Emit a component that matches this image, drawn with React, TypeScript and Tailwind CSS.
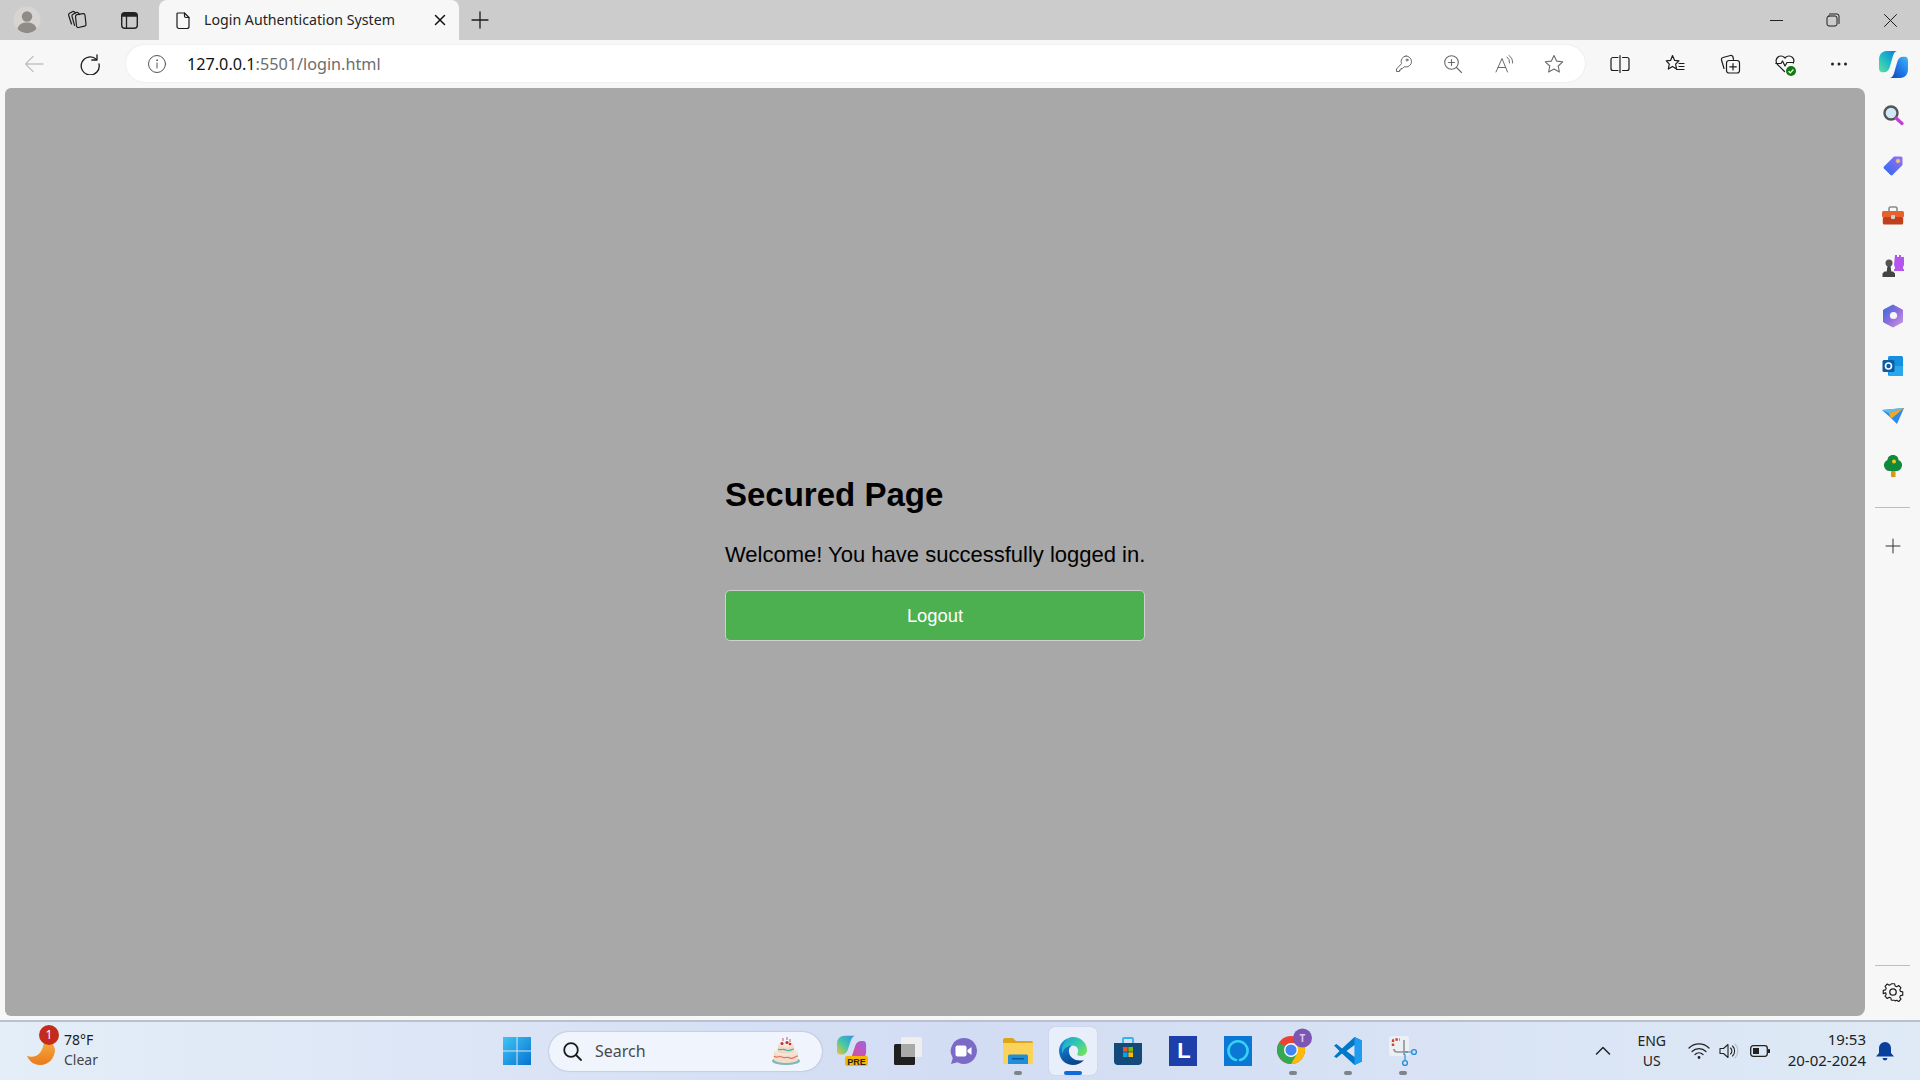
import React from "react";

const ui = "font-['Noto_Sans','Open_Sans',sans-serif]";

function S({ size = 20, children, className = "", vb = "0 0 20 20", sw = 1.2 }: { size?: number; children: React.ReactNode; className?: string; vb?: string; sw?: number }) {
  return (
    <svg width={size} height={size} viewBox={vb} fill="none" stroke="currentColor" strokeWidth={sw} strokeLinecap="round" strokeLinejoin="round" className={className}>
      {children}
    </svg>
  );
}

function Cell({ w, children, className = "" }: { w: string; children?: React.ReactNode; className?: string }) {
  return <div className={`flex h-full shrink-0 items-center justify-center ${w} ${className}`}>{children}</div>;
}

const LEFT_BLOB = "M8 1H19C17 1 15.500 3 14.500 6L11 18C10 21 8 23 5 23H3C1 23 0 21 0 19V10C0 5 3 1 8 1z";
const RIGHT_BLOB = "M22 29H11C13 29 14.500 27 15.500 24L19 12C20 9 22 7 25 7H27C29 7 30 9 30 11V20C30 25 27 29 22 29z";

function TabStrip() {
  return (
    <div className="flex h-10 shrink-0 bg-[#cccccc] text-[#1c1c1c]">
      <Cell w="w-[54px]">
        <svg width="28" height="28" viewBox="0 0 28 28">
          <circle cx="14" cy="14" r="13.500" fill="#d6d5d2" />
          <circle cx="14" cy="10.500" r="5.200" fill="#8f8c87" />
          <path d="M4.500 23c1-5 5-6.500 9.500-6.500s8.500 1.500 9.500 6.500a13 13 0 0 1-19 0z" fill="#8f8c87" />
        </svg>
      </Cell>
      <Cell w="w-[46px]">
        <S size={22} vb="0 0 22 22" sw={1.200}>
          <path d="M9.500 7.500a1.800 1.800 0 0 1 1.500-1.800l6-1a1.800 1.800 0 0 1 2 1.500l1 9a1.800 1.800 0 0 1-1.500 2l-6 1.300a1.800 1.800 0 0 1-2-1.500z" />
          <path d="M13.500 5.500 12.500 4a1.800 1.800 0 0 0-2.200-.5L7 5.200A1.800 1.800 0 0 0 6 7.300l2.500 9" />
          <path d="M9.500 3.800 8.500 3a1.800 1.800 0 0 0-2.200-.3L3.500 4.300A1.800 1.800 0 0 0 2.700 6.500l2.800 8.500" />
        </S>
      </Cell>
      <Cell w="w-[59px]">
        <svg width="19" height="19" viewBox="0 0 19 19" fill="none">
          <rect x="1.700" y="1.700" width="15.600" height="15.600" rx="3" stroke="#222" strokeWidth="1.400" />
          <path d="M2 5.700V4a2 2 0 0 1 2-2h11a2 2 0 0 1 2 2v1.700z" fill="#222" />
          <path d="M6.500 5v12" stroke="#222" strokeWidth="1.300" />
        </svg>
      </Cell>
      <div className={`flex w-[300px] shrink-0 items-center self-stretch rounded-t-lg bg-[#f7f7f7] pl-[15px] ${ui}`}>
        <S size={19} vb="0 0 19 19" sw={1.200}>
          <path d="M4 2h6.500L15 6.500V15.500a2 2 0 0 1-2 2H5a2 2 0 0 1-2-2V3a1 1 0 0 1 1-1z" />
          <path d="M10.500 2v3a1.500 1.500 0 0 0 1.500 1.500h3" />
        </S>
        <span className="ml-[11px] w-[229px] whitespace-nowrap text-[14.200px] leading-none text-[#242424]">Login Authentication System</span>
        <S size={14} vb="0 0 14 14" sw={1.500} className="text-[#111]">
          <path d="M2.500 2.500l9 9M11.500 2.500l-9 9" />
        </S>
      </div>
      <Cell w="w-[42px]">
        <S size={20} vb="0 0 20 20" sw={1.300}>
          <path d="M10 2v16M2 10h16" />
        </S>
      </Cell>
      <div className="flex-1" />
      <Cell w="w-[56px]" className="pr-[2px]">
        <div className="h-px w-[13px] bg-[#222]" />
      </Cell>
      <Cell w="w-[56px]">
        <S size={14} vb="0 0 14 14" sw={1}>
          <rect x="1" y="3" width="10" height="10" rx="2" />
          <path d="M3.500 1h7.500a2 2 0 0 1 2 2v7.500" />
        </S>
      </Cell>
      <Cell w="w-[59px]">
        <S size={15} vb="0 0 15 15" sw={1}>
          <path d="M1.500 1.500l12 12M13.500 1.500l-12 12" />
        </S>
      </Cell>
    </div>
  );
}

function Toolbar() {
  return (
    <div className="flex h-12 shrink-0 items-start bg-[#f7f7f7] text-[#1c1c1c]">
      <Cell w="w-[68px]" className="text-[#c2c2c2]">
        <S size={22} vb="0 0 22 22" sw={1.300}>
          <path d="M20 11H2.500M10 3.500 2.500 11l7.500 7.500" />
        </S>
      </Cell>
      <Cell w="w-[44px]">
        <S size={22} vb="0 0 22 22" sw={1.300}>
          <path d="M17.500 6.500A9 9 0 1 0 20 11" />
          <path d="M18 1.800v5.200h-5.200" />
        </S>
      </Cell>
      <div className={`ml-[14px] mt-[5px] flex h-[37px] w-[1459px] shrink-0 items-center rounded-full bg-white shadow-[0_0_2px_rgba(0,0,0,0.1)] ${ui}`}>
        <div className="flex w-[61px] shrink-0 items-center justify-center text-[#555]">
          <S size={20} vb="0 0 20 20" sw={1}>
            <circle cx="10" cy="10" r="8.500" />
            <path d="M10 9v5" />
            <circle cx="10" cy="6.200" r="0.400" />
          </S>
        </div>
        <span className="whitespace-nowrap pt-[1px] text-[16.200px] leading-none text-[#6d6d6d]">
          <span className="text-[#111]">127.0.0.1</span>:5501/login.html
        </span>
        <div className="flex-1" />
        <div className="flex items-center text-[#6a6a6a]">
          <Cell w="w-[50px]" className="!h-auto">
            <S size={20} vb="0 0 20 20" sw={1}>
              <path d="M12.500 2a5.500 5.500 0 0 1 0 11c-.7 0-1.300-.1-1.900-.3L9 14.500H7.500V16H6v1.500H3v-2.500l5-5.300a5.500 5.500 0 0 1 4.500-7.700z" transform="translate(0.500 0)" />
              <circle cx="14" cy="6" r="1" />
            </S>
          </Cell>
          <Cell w="w-[50px]" className="!h-auto">
            <S size={20} vb="0 0 20 20" sw={1.100}>
              <circle cx="8.500" cy="8.500" r="6.800" />
              <path d="M13.500 13.500 18.500 18.500M8.500 5.500v6M5.500 8.500h6" />
            </S>
          </Cell>
          <Cell w="w-[51px]" className="!h-auto">
            <S size={20} vb="0 0 20 20" sw={1}>
              <path d="M2 18 8 4.500 13.500 18M4 13.500h7.500" />
              <path d="M13 3a6 6 0 0 1 2.500 6M15 1.500a8 8 0 0 1 3.500 7.500" />
            </S>
          </Cell>
          <Cell w="w-[50px]" className="!h-auto">
            <S size={22} vb="0 0 22 22" sw={1.100}>
              <path d="M11 2.500l2.600 5.600 6.100.7-4.500 4.200 1.200 6-5.400-3-5.400 3 1.200-6-4.500-4.200 6.100-.7z" />
            </S>
          </Cell>
          <div className="w-[6px]" />
        </div>
      </div>
      <div className="ml-[7px] flex h-[48px] items-center">
        <Cell w="w-[55px]">
          <S size={22} vb="0 0 22 22" sw={1.200}>
            <path d="M9 4.500H4a2 2 0 0 0-2 2v9a2 2 0 0 0 2 2h5M13.500 4.500h4.500a2 2 0 0 1 2 2v9a2 2 0 0 1-2 2h-4.500M11 2.500v17" />
          </S>
        </Cell>
        <Cell w="w-[55px]">
          <S size={22} vb="0 0 22 22" sw={1.200}>
            <path d="M8.500 2.500l2 4.800 4.500.5-3.400 3.300 1 4.900-4.100-2.600-4.200 2.600 1-4.900L2.300 7.800l4.400-.5z" />
            <path d="M15 10.500h5M15 13.500h5M12.500 16.500h7.500" />
          </S>
        </Cell>
        <Cell w="w-[55px]">
          <S size={22} vb="0 0 22 22" sw={1.200}>
            <rect x="7.500" y="7.500" width="13" height="12.500" rx="2.500" />
            <path d="M14 10.500v6.500M10.800 13.800h6.500M5 15.500 2.500 7a2 2 0 0 1 1.500-2.500L11.500 2.500a2 2 0 0 1 2.500 1.500l.5 2.500" />
          </S>
        </Cell>
        <Cell w="w-[55px]" className="relative">
          <S size={22} vb="0 0 22 22" sw={1.200}>
            <path d="M10.500 18.500 3.500 11.500a5 5 0 0 1 0-7 4.800 4.800 0 0 1 7 0l.5.500.5-.5a4.800 4.800 0 0 1 7 0c1.500 1.500 1.700 3.700.8 5.500" />
            <path d="M1.800 10.500H7l1.500-2.500L11 13l2-3.500h6" />
          </S>
          <svg width="10" height="10" viewBox="0 0 10 10" className="absolute left-[29px] top-[26px]">
            <circle cx="5" cy="5" r="5" fill="#107c10" />
            <path d="M2.600 5.200 4.300 6.800 7.400 3.500" fill="none" stroke="#fff" strokeWidth="1.200" />
          </svg>
        </Cell>
        <Cell w="w-[54px]">
          <svg width="18" height="4" viewBox="0 0 18 4" fill="#222">
            <circle cx="2.500" cy="2" r="1.500" />
            <circle cx="9" cy="2" r="1.500" />
            <circle cx="15.500" cy="2" r="1.500" />
          </svg>
        </Cell>
        <Cell w="w-[54px]">
          <svg width="31" height="29" viewBox="0 0 30 30">
            <defs>
              <linearGradient id="cop1" x1="0" y1="1" x2="1" y2="0">
                <stop offset="0" stopColor="#5fe0a0" />
                <stop offset="0.5" stopColor="#1cb8c8" />
                <stop offset="1" stopColor="#0a78d8" />
              </linearGradient>
              <linearGradient id="cop2" x1="0" y1="1" x2="1" y2="0">
                <stop offset="0" stopColor="#0d44b8" />
                <stop offset="0.5" stopColor="#1f78e8" />
                <stop offset="1" stopColor="#40b8f5" />
              </linearGradient>
            </defs>
            <path d={LEFT_BLOB} fill="url(#cop1)" />
            <path d={RIGHT_BLOB} fill="url(#cop2)" />
          </svg>
        </Cell>
      </div>
    </div>
  );
}

function SideIcon({ children, className = "mt-[26px]" }: { children: React.ReactNode; className?: string }) {
  return <div className={`flex h-[24px] w-full shrink-0 items-center justify-center ${className}`}>{children}</div>;
}

function Sidebar() {
  return (
    <div className="flex h-full w-[55px] shrink-0 flex-col items-center bg-[#f7f7f7]">
      <SideIcon className="mt-[15px]">
        <svg width="22" height="22" viewBox="0 0 22 22">
          <circle cx="9" cy="9" r="6.500" fill="#cfe9f8" stroke="#555" strokeWidth="2.400" />
          <path d="M14 14l6 5.500" stroke="#c03fd0" strokeWidth="3.200" strokeLinecap="round" />
        </svg>
      </SideIcon>
      <SideIcon className="mt-[27px]">
        <svg width="22" height="22" viewBox="0 0 22 22">
          <defs>
            <linearGradient id="tag" x1="0" y1="1" x2="1" y2="0">
              <stop offset="0" stopColor="#2a6af0" />
              <stop offset="1" stopColor="#9a70f0" />
            </linearGradient>
          </defs>
          <path d="M12 1.500h7a1.500 1.500 0 0 1 1.500 1.500v7L10.500 20a1.500 1.500 0 0 1-2 0L2 13.500a1.500 1.500 0 0 1 0-2z" fill="url(#tag)" />
          <circle cx="16" cy="6" r="2" fill="#f8d040" stroke="#b9a0f0" strokeWidth="0.600" />
        </svg>
      </SideIcon>
      <SideIcon>
        <svg width="24" height="20" viewBox="0 0 24 20">
          <path d="M8 5V2.500A1.500 1.500 0 0 1 9.500 1h5A1.500 1.500 0 0 1 16 2.500V5" fill="none" stroke="#8a8a8a" strokeWidth="1.600" />
          <rect x="1" y="5" width="22" height="6.500" rx="1.500" fill="#e8602c" />
          <rect x="1.800" y="11" width="20.400" height="7.500" rx="1.500" fill="#c0401c" />
          <rect x="10" y="9" width="4" height="4" rx="1" fill="#d0d0d0" />
        </svg>
      </SideIcon>
      <SideIcon>
        <svg width="24" height="24" viewBox="0 0 24 24">
          <path d="M14 1h2v2h2V1h2v2h3V1v10l-1 2v2h1v2H13v-2h1v-2l-1-2z" fill="#b455ee" />
          <circle cx="8" cy="9" r="3.500" fill="#555" />
          <path d="M6.500 12h3l.8 5.500H12l2 2V23H1.500v-3.500l2-2h2.200z" fill="#444" />
        </svg>
      </SideIcon>
      <SideIcon>
        <svg width="22" height="24" viewBox="0 0 22 24">
          <defs>
            <linearGradient id="m365" x1="0" y1="0" x2="1" y2="1">
              <stop offset="0" stopColor="#2f6fe0" />
              <stop offset="0.5" stopColor="#8e6cdc" />
              <stop offset="1" stopColor="#c89ae5" />
            </linearGradient>
          </defs>
          <path d="M11 1 20.500 6v12L11 23 1.500 18V6z" fill="url(#m365)" stroke="url(#m365)" strokeWidth="1" strokeLinejoin="round" />
          <circle cx="11.500" cy="11.500" r="3.600" fill="#f7f7f7" />
        </svg>
      </SideIcon>
      <SideIcon>
        <svg width="22" height="22" viewBox="0 0 22 22">
          <rect x="6" y="1" width="15" height="20" rx="1.500" fill="#1490df" />
          <path d="M7 11h14v8.500a1.500 1.500 0 0 1-1.500 1.500H7z" fill="#28a8ea" />
          <rect x="0.500" y="5" width="12" height="12" rx="1.500" fill="#0a5ca8" />
          <circle cx="6.500" cy="11" r="3" fill="none" stroke="#fff" strokeWidth="1.600" />
        </svg>
      </SideIcon>
      <SideIcon>
        <svg width="24" height="18" viewBox="0 0 24 18">
          <path d="M1 3 23 1 16 17 10 11z" fill="#2a8ce8" />
          <path d="M1 3 23 1 8 6z" fill="#58c0f5" />
          <path d="M23 1 8 6l2 6z" fill="#f5a623" />
        </svg>
      </SideIcon>
      <SideIcon>
        <svg width="20" height="24" viewBox="0 0 20 24">
          <rect x="8" y="16" width="4.500" height="7" fill="#d89a10" />
          <path d="M10 1c3.500 0 5.500 2.500 5.500 5 2.500 1 4 3.500 3.500 6-.5 3-3 5-5.500 5h-7C4 17 1.500 15 1 12c-.5-2.500 1-5 3.500-6C4.500 3.500 6.500 1 10 1z" fill="#0f8a3c" />
          <circle cx="11" cy="7.500" r="2" fill="#f5c518" />
        </svg>
      </SideIcon>
      <div className="mt-[29px] h-px w-[35px] shrink-0 bg-[#bdbdbd]" />
      <div className="mt-[28px] flex h-[20px] items-center justify-center text-[#333]">
        <S size={16} vb="0 0 16 16" sw={1}>
          <path d="M8 1v14M1 8h14" />
        </S>
      </div>
      <div className="flex-1" />
      <div className="h-px w-[35px] shrink-0 bg-[#bdbdbd]" />
      <div className="mb-[16px] mt-[14px] flex h-[24px] items-center justify-center text-[#1c1c1c]">
        <svg width="22" height="22" viewBox="0 0 24 24" fill="none" stroke="currentColor" strokeWidth="1.400" strokeLinejoin="round">
          <path d="M10 2h4l.6 2.800 1.900.8 2.400-1.500 2.800 2.800-1.500 2.400.8 1.900 2.800.6v4l-2.800.6-.8 1.900 1.500 2.400-2.800 2.800-2.400-1.500-1.900.8L14 22h-4l-.6-2.800-1.900-.8-2.400 1.500-2.800-2.800 1.500-2.400-.8-1.900L.2 14v-4l2.800-.6.8-1.900-1.500-2.400 2.800-2.800 2.400 1.500 1.900-.8z" transform="translate(1.200 1.200) scale(0.9)" />
          <circle cx="12" cy="12" r="3.500" />
        </svg>
      </div>
    </div>
  );
}

function Page() {
  return (
    <div className="flex h-[928px] w-[1860px] shrink-0 items-center justify-center rounded-l-md rounded-r-lg bg-[#a8a8a8] font-['Liberation_Sans',Arial,sans-serif] text-black">
      <div className="mt-[13px] flex w-[420px] flex-col">
        <h2 className="text-[33px] font-bold leading-[38px]">Secured Page</h2>
        <p className="mt-[28px] whitespace-nowrap text-[22px] leading-[25px]">Welcome! You have successfully logged in.</p>
        <button className="mt-[23px] h-[51px] w-full rounded-[5px] border border-[#cfcfcf] bg-[#4caf50] text-[18.400px] text-white">Logout</button>
      </div>
    </div>
  );
}

function AppIcon({ children, dot, active }: { children: React.ReactNode; dot?: boolean; active?: boolean }) {
  return (
    <div className={`relative flex h-[48px] shrink-0 items-center justify-center ${active ? "mx-[3.500px] w-[48px] rounded-md bg-[#eef2fb]/80 shadow-[0_0_1px_rgba(0,0,0,0.25)]" : "w-[55px]"}`}>
      {children}
      {dot && <div className="absolute bottom-0 left-1/2 h-[4px] w-[8px] -translate-x-1/2 rounded-full bg-[#7e838c]" />}
      {active && <div className="absolute bottom-0 left-1/2 h-[4px] w-[18px] -translate-x-1/2 rounded-full bg-[#0f6cd6]" />}
    </div>
  );
}

function Taskbar() {
  return (
    <div className={`flex h-[60px] shrink-0 items-center border-t-2 border-[#b9c1cd] bg-gradient-to-r from-[#e4eef8] via-[#d2dcf3] to-[#dfeaf6] text-[#1b1b1b] ${ui}`}>
      <div className="relative ml-[26px] flex w-[493px] shrink-0 items-center">
        <svg width="30" height="30" viewBox="0 0 30 30" className="mt-[2px]">
          <defs>
            <linearGradient id="moon" x1="0" y1="0" x2="0" y2="1">
              <stop offset="0" stopColor="#f8b040" />
              <stop offset="1" stopColor="#ea7a1c" />
            </linearGradient>
          </defs>
          <path d="M18 2a13 13 0 0 1 11 10c0 9-6 16-15 16C8 28 3 24 1 19c8 3 17-2 17-17z" fill="url(#moon)" />
        </svg>
        <div className="absolute left-[13px] top-[-7px] flex h-[20px] w-[20px] items-center justify-center rounded-full bg-[#c42b1c] text-[12px] leading-none text-white">1</div>
        <div className="-mt-[2px] ml-[8px] flex flex-col text-[14px] leading-[20px]">
          <span>78°F</span>
          <span className="text-[#444]">Clear</span>
        </div>
      </div>
      <svg width="30" height="30" viewBox="0 0 30 30" className="-ml-[17px] mr-[17px] shrink-0">
        <defs>
          <linearGradient id="win" x1="0" y1="0" x2="1" y2="1">
            <stop offset="0" stopColor="#3fc5f6" />
            <stop offset="1" stopColor="#0673d0" />
          </linearGradient>
        </defs>
        <path d="M1 1h13.500v13.500H1zM15.500 1H29v13.500H15.500zM1 15.500h13.500V29H1zM15.500 15.500H29V29H15.500z" fill="url(#win)" />
      </svg>
      <div className="flex h-[39px] w-[273px] shrink-0 items-center rounded-full bg-[#f0f4fc] shadow-[0_0_1.500px_rgba(60,70,100,0.5)]">
        <S size={21} vb="0 0 21 21" sw={1.800} className="ml-[13px] text-[#1a1a1a]">
          <circle cx="9" cy="9" r="6.800" />
          <path d="M14 14l5 5" />
        </S>
        <span className="ml-[12px] text-[16px] leading-none text-[#4a4a4a]">Search</span>
        <div className="flex-1" />
        <svg width="30" height="30" viewBox="0 0 30 30" className="mr-[21px]">
          <ellipse cx="15" cy="25" rx="14" ry="4" fill="#7fb8b8" />
          <path d="M3 16v8c3 4 21 4 24 0v-8z" fill="#f2ddcc" />
          <path d="M3 20c3 3 5-1 8 1s5-1 8 1 5-2 8-2" stroke="#e8705a" fill="none" strokeWidth="1.200" />
          <ellipse cx="15" cy="16" rx="12" ry="3.500" fill="#f5e6d8" />
          <path d="M7 9v7c3 2 13 2 16 0V9z" fill="#efd8c6" />
          <path d="M7 13c3 2 4-1 8 1s5-1 8-1" stroke="#4ab0a8" fill="none" strokeWidth="1.200" />
          <ellipse cx="15" cy="8.500" rx="8" ry="3" fill="#f5e6d8" />
          <circle cx="11" cy="7.500" r="1.500" fill="#c0303a" />
          <circle cx="16" cy="6.500" r="1.500" fill="#c0303a" />
          <circle cx="19" cy="8" r="1.300" fill="#c0303a" />
          <path d="M12 5V2M16 4V1M19 6V3" stroke="#c0303a" strokeWidth="0.800" />
        </svg>
      </div>
      <div className="ml-[3px] flex items-center">
        <AppIcon>
          <svg width="32" height="32" viewBox="0 0 32 32">
            <defs>
              <linearGradient id="c2a" x1="0" y1="1" x2="1" y2="0">
                <stop offset="0" stopColor="#f6c324" />
                <stop offset="0.450" stopColor="#45c8a8" />
                <stop offset="1" stopColor="#2f8ee8" />
              </linearGradient>
              <linearGradient id="c2b" x1="0" y1="1" x2="1" y2="0">
                <stop offset="0" stopColor="#e84a8a" />
                <stop offset="1" stopColor="#a060e0" />
              </linearGradient>
            </defs>
            <g transform="scale(0.97 0.85)">
              <path d={LEFT_BLOB} fill="url(#c2a)" />
              <path d={RIGHT_BLOB} fill="url(#c2b)" />
            </g>
            <rect x="8" y="21" width="23" height="10" rx="2" fill="#f5b800" />
            <text x="19.500" y="29.500" textAnchor="middle" fontSize="9" fontWeight="700" fontFamily="'Liberation Sans'" fill="#222">PRE</text>
          </svg>
        </AppIcon>
        <AppIcon>
          <svg width="30" height="30" viewBox="0 0 30 30">
            <rect x="1" y="8" width="21" height="21" rx="1.500" fill="#1f1f1f" />
            <rect x="8" y="1" width="21" height="20" rx="1.500" fill="#eeeeee" />
            <rect x="8" y="8" width="14" height="13" fill="#a9a9a9" />
          </svg>
        </AppIcon>
        <AppIcon>
          <svg width="30" height="30" viewBox="0 0 30 30">
            <path d="M16 2a13 13 0 1 1-6.500 24.300L3 28l1.800-6A13 13 0 0 1 16 2z" fill="#7b6bc6" />
            <rect x="7.500" y="9.500" width="11" height="11" rx="2" fill="#fff" />
            <path d="M19.500 14l4-3v8l-4-3z" fill="#fff" />
          </svg>
        </AppIcon>
        <AppIcon dot>
          <svg width="30" height="28" viewBox="0 0 30 28">
            <path d="M0 3a2 2 0 0 1 2-2h8l3 3h15a2 2 0 0 1 2 2v2H0z" fill="#dca51c" />
            <path d="M0 6h30v20a1 1 0 0 1-1 1H1a1 1 0 0 1-1-1z" fill="#fbd25a" />
            <path d="M5 19a1.500 1.500 0 0 1 1.500-1.500h17A1.500 1.500 0 0 1 25 19v8H5z" fill="#1f8fdc" />
            <rect x="9" y="21" width="12" height="1.500" fill="#0f5a90" />
          </svg>
        </AppIcon>
        <AppIcon active>
          <svg width="30" height="30" viewBox="0 0 30 30">
            <defs>
              <linearGradient id="edgeA" x1="0.700" y1="1" x2="0.200" y2="0">
                <stop offset="0" stopColor="#0a3f80" />
                <stop offset="0.500" stopColor="#0d66b8" />
                <stop offset="1" stopColor="#1b9de0" />
              </linearGradient>
              <linearGradient id="edgeB" x1="0" y1="0" x2="1" y2="0.800">
                <stop offset="0" stopColor="#1a9ed8" />
                <stop offset="0.500" stopColor="#30c8b0" />
                <stop offset="1" stopColor="#78e060" />
              </linearGradient>
            </defs>
            <path d="M15 1C23 1 29 7 29 14C29 18 26 20 22.500 20C20 20 18.500 19 19.500 17.500C21 15 20 10 15 9.500C10 9.500 6 12 4 17C3 9 8 1 15 1z" fill="url(#edgeB)" />
            <path d="M4 17C6 11 11 9 15 9.500C12 10 10.500 13 11 16C11.500 22 18 26 26 24C23 27.500 19 29 15 29C8 29 1.500 24 1 15C1 8 6 3 12 1.500C7 4 4 9 4 17z" fill="url(#edgeA)" />
          </svg>
        </AppIcon>
        <AppIcon>
          <svg width="28" height="30" viewBox="0 0 28 30">
            <path d="M9 7V3a1 1 0 0 1 1-1h8a1 1 0 0 1 1 1v4" fill="none" stroke="#2eb4ea" strokeWidth="1.800" />
            <path d="M0 7h28v18a4 4 0 0 1-4 4H4a4 4 0 0 1-4-4z" fill="#134a7a" />
            <rect x="9" y="11" width="4.600" height="4.600" fill="#f25022" />
            <rect x="14.400" y="11" width="4.600" height="4.600" fill="#7fba00" />
            <rect x="9" y="16.400" width="4.600" height="4.600" fill="#00a4ef" />
            <rect x="14.400" y="16.400" width="4.600" height="4.600" fill="#ffb900" />
          </svg>
        </AppIcon>
        <AppIcon>
          <div className="flex h-[30px] w-[28px] items-center justify-center bg-[#1e3faa] pl-[3px] font-['Liberation_Sans'] text-[22px] font-bold leading-none text-white">L</div>
        </AppIcon>
        <AppIcon>
          <div className="flex h-[30px] w-[28px] items-center justify-center bg-[#0a78d4]">
            <svg width="24" height="24" viewBox="0 0 24 24" fill="none">
              <path d="M10 21A9.500 9.500 0 1 1 14 21" stroke="#35d2f5" strokeWidth="2.600" strokeLinecap="round" />
            </svg>
          </div>
        </AppIcon>
        <AppIcon dot>
          <svg width="36" height="40" viewBox="0 0 36 40" className="relative left-[2px] top-[-3px]">
            <circle cx="14" cy="22" r="14" fill="#ea4335" />
            <path d="M2 15A14 14 0 0 0 14 36l7-12z" fill="#34a853" />
            <path d="M14 36a14 14 0 0 0 14-14c0-3-1-5-2-7H14l7 9z" fill="#fbbc05" />
            <circle cx="14" cy="22" r="7" fill="#fff" />
            <circle cx="14" cy="22" r="5.600" fill="#4285f4" />
            <circle cx="25.500" cy="10" r="9.500" fill="#7d56b4" />
            <text x="25.500" y="13.500" textAnchor="middle" fontSize="10" fontWeight="700" fontFamily="'Noto Sans'" fill="#d8c8ee">T</text>
          </svg>
        </AppIcon>
        <AppIcon dot>
          <svg width="30" height="30" viewBox="0 0 30 30">
            <path d="M21.500 1 29 4.500v21L21.500 29 9 17.500 3.500 22 1 20.500 6.500 15 1 9.500 3.500 8 9 12.500z" fill="#0078c8" />
            <path d="M21.500 1 29 4.500v21L21.500 29z" fill="#1f9cf0" />
            <path d="M21.500 9v12L13.500 15z" fill="#dbe3f5" />
          </svg>
        </AppIcon>
        <AppIcon dot>
          <svg width="30" height="32" viewBox="0 0 30 32">
            <rect x="1" y="1" width="20" height="20" rx="2.500" fill="#eceff3" />
            <path d="M5 11V6a1.500 1.500 0 0 1 1.500-1.500H12" fill="none" stroke="#d8402c" strokeWidth="2.400" strokeDasharray="2.500 1.500" />
            <path d="M6 14a3 3 0 0 0 3 3h11M16 5v15" fill="none" stroke="#8f9296" strokeWidth="1.600" />
            <circle cx="26" cy="17" r="2.400" fill="none" stroke="#2a90d8" strokeWidth="1.400" />
            <circle cx="17" cy="28" r="2.400" fill="none" stroke="#2a90d8" strokeWidth="1.400" />
            <path d="M17 17h7M17 19v7" stroke="#2a90d8" strokeWidth="1.200" />
          </svg>
        </AppIcon>
      </div>
      <div className="flex-1" />
      <S size={16} vb="0 0 16 16" sw={1.500} className="mr-[23px] text-[#222]">
        <path d="M1.500 11 8 4.500l6.500 6.500" />
      </S>
      <div className="mr-[18px] flex w-[36px] flex-col items-center text-[14px] leading-[20px] text-[#222]">
        <span>ENG</span>
        <span>US</span>
      </div>
      <svg width="22" height="18" viewBox="0 0 22 18" fill="none" stroke="#222" strokeWidth="1.200" strokeLinecap="round" className="mr-[9px]">
        <path d="M1 6a14 14 0 0 1 20 0M4 9.500a10 10 0 0 1 14 0M7 12.500a6 6 0 0 1 8 0" />
        <circle cx="11" cy="15.500" r="0.800" fill="#222" />
      </svg>
      <svg width="20" height="18" viewBox="0 0 20 18" fill="none" stroke="#222" strokeWidth="1.100" strokeLinejoin="round" strokeLinecap="round" className="mr-[11px]">
        <path d="M1 6.500v5h3.500L9 15.500v-13L4.500 6.500z" />
        <path d="M11.500 6a4 4 0 0 1 0 6M13.500 4a7 7 0 0 1 0 10" />
        <path d="M16 2a10 10 0 0 1 0 14" stroke="#b9bfc9" />
      </svg>
      <svg width="20" height="14" viewBox="0 0 20 14" className="mr-[18px]">
        <rect x="0.700" y="1.700" width="16.600" height="10.600" rx="2.500" fill="none" stroke="#222" strokeWidth="1.300" />
        <rect x="3" y="4" width="6" height="6" fill="#222" />
        <rect x="18" y="5" width="2" height="4" rx="0.500" fill="#222" />
      </svg>
      <div className="-mt-[2px] flex flex-col items-end text-[15px] leading-[21px] text-[#222]">
        <span>19:53</span>
        <span>20-02-2024</span>
      </div>
      <svg width="18" height="20" viewBox="0 0 18 20" className="ml-[10px] mr-[26px]">
        <path d="M9 1a6 6 0 0 1 6 6v5l3 3.500H0L3 12V7a6 6 0 0 1 6-6z" fill="#0a3f9e" />
        <path d="M6.500 17a2.500 2.500 0 0 0 5 0z" fill="#0a3f9e" />
      </svg>
    </div>
  );
}

export default function App() {
  return (
    <div className="flex h-[1080px] w-[1920px] flex-col overflow-hidden bg-[#f7f7f7]">
      <TabStrip />
      <Toolbar />
      <div className="flex h-[932px] shrink-0 pl-[5px]">
        <Page />
        <Sidebar />
      </div>
      <Taskbar />
    </div>
  );
}
